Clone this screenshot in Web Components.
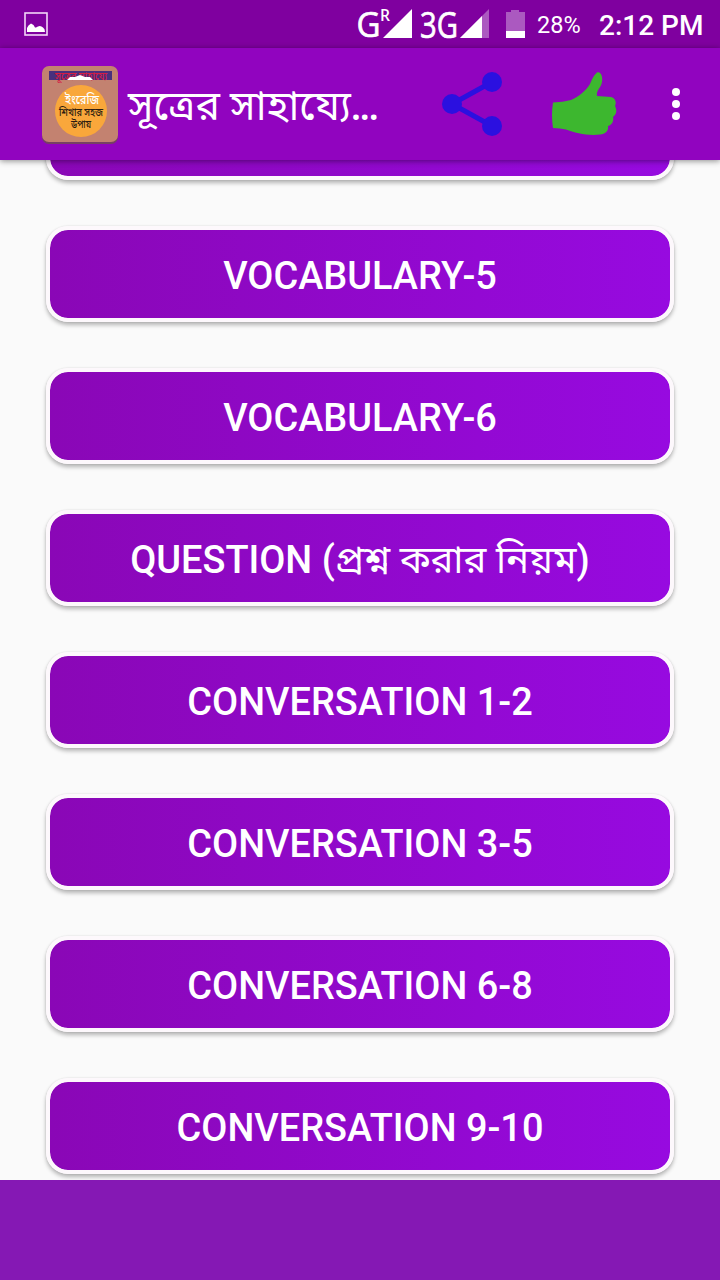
<!DOCTYPE html>
<html lang="bn">
<head>
<meta charset="UTF-8">
<meta name="viewport" content="width=device-width, initial-scale=1.0">
<title>সূত্রের সাহায্যে</title>
<style>
    body {
        margin: 0;
        background: #fafafa;
        font-family: Roboto, "Noto Sans", "Noto Sans Bengali", sans-serif;
    }

    .bn {
        font-weight: 400;
        font-size: 38.3px;
    }

    .dots {
        font-family: "Noto Sans", sans-serif;
        font-size: 36px;
        font-weight: 600;
        letter-spacing: -1px;
    }
</style>
</head>
<body>
<app-screen>
    <status-bar slot="status" battery="28%" time="2:12 PM"></status-bar>
    <app-bar slot="bar">সূত্রের সাহায্যে<span class="dots">...</span></app-bar>
    <lesson-button></lesson-button>
    <lesson-button>VOCABULARY-5</lesson-button>
    <lesson-button>VOCABULARY-6</lesson-button>
    <lesson-button>QUESTION (<span class="bn">প্রশ্ন করার নিয়ম</span>)</lesson-button>
    <lesson-button>CONVERSATION 1-2</lesson-button>
    <lesson-button>CONVERSATION 3-5</lesson-button>
    <lesson-button>CONVERSATION 6-8</lesson-button>
    <lesson-button>CONVERSATION 9-10</lesson-button>
</app-screen>

<script>
class AppScreen extends HTMLElement {
    connectedCallback() {
        this.attachShadow({ mode: 'open' });
        this.shadowRoot.innerHTML = `
            <style>
                :host {
                    display: flex;
                    flex-direction: column;
                    width: 720px;
                    height: 1280px;
                    overflow: hidden;
                }

                .list {
                    flex: 1;
                    min-height: 0;
                    display: flex;
                    flex-direction: column;
                    justify-content: flex-end;
                    gap: 46px;
                    padding: 0 46px 6px;
                    overflow: hidden;
                    background: #fafafa;
                }

                .ad-banner {
                    height: 100px;
                    background: #8518b4;
                }
            </style>
            <slot name="status"></slot>
            <slot name="bar"></slot>
            <div class="list"><slot></slot></div>
            <div class="ad-banner"></div>
        `;
    }
}

class StatusBar extends HTMLElement {
    connectedCallback() {
        this.attachShadow({ mode: 'open' });
        this.shadowRoot.innerHTML = `
            <style>
                :host {
                    display: flex;
                    align-items: center;
                    height: 48px;
                    box-sizing: border-box;
                    padding: 0 17px 0 24px;
                    background: #7f009f;
                    color: #fff;
                }

                svg {
                    display: block;
                }

                .signal {
                    margin-left: auto;
                }

                .battery {
                    width: 43px;
                    margin-left: 12px;
                    padding-top: 2px;
                    font-size: 23.5px;
                    white-space: nowrap;
                }

                .time {
                    width: 104px;
                    margin-left: 19px;
                    font-size: 28px;
                    font-weight: 500;
                    white-space: nowrap;
                    padding-top: 2px;
                }
            </style>
            <svg width="24" height="48" viewBox="0 0 24 48">
                <rect x="1" y="13" width="22" height="22" fill="none" stroke="#f3d5f8" stroke-width="1.6"/>
                <path d="M3 32v-4q1-3 4-4.500q3 1 4 4h1q4-3 7 0q2 1 2 4.500z" fill="#fff"/>
            </svg>
            <svg class="signal" width="169" height="48" viewBox="356 0 169 48" fill="#fff">
                <g font-family="Open Sans, Noto Sans, sans-serif">
                    <text x="356.500" y="37" font-size="35" stroke="#fff" stroke-width=".7" textLength="24" lengthAdjust="spacingAndGlyphs">G</text>
                    <text x="380" y="21" font-size="16" font-weight="600" textLength="10" lengthAdjust="spacingAndGlyphs">R</text>
                    <text x="420" y="38" font-size="36" stroke="#fff" stroke-width=".7" textLength="38" lengthAdjust="spacingAndGlyphs">3G</text>
                </g>
                <path d="M412 9v29h-29z"/>
                <path d="M489 9v29h-29z" opacity=".35"/>
                <path d="M482 16v22h-22z"/>
                <path d="M511 10h8v2h6v26h-19V12h5z" opacity=".35"/>
                <path d="M506 31h19v7h-19z"/>
            </svg>
            <span class="battery">${this.getAttribute('battery')}</span>
            <span class="time">${this.getAttribute('time')}</span>
        `;
    }
}

class AppBar extends HTMLElement {
    connectedCallback() {
        this.attachShadow({ mode: 'open' });
        this.shadowRoot.innerHTML = `
            <style>
                :host {
                    display: flex;
                    align-items: center;
                    height: 112px;
                    box-sizing: border-box;
                    padding: 0 32px 0 40px;
                    background: #9104bf;
                    box-shadow: 0 1px 6px rgba(0, 0, 0, 0.45);
                    color: #fff;
                    position: relative;
                    z-index: 1;
                }

                svg {
                    display: block;
                    flex: none;
                }

                .title {
                    width: 252px;
                    margin-left: 8px;
                    padding-top: 4px;
                    font-size: 41px;
                    line-height: 56px;
                    white-space: nowrap;
                }

                .share {
                    margin-left: 60px;
                }

                .like {
                    margin-left: 46px;
                }

                .more {
                    margin-left: auto;
                }
            </style>
            <svg width="80" height="112" viewBox="40 48 80 112">
                <rect x="42" y="67" width="76" height="77" rx="7" fill="#774063"/>
                <rect x="42" y="66" width="76" height="76" rx="7" fill="#c38270"/>
                <path d="M49 71h63v9H49z" fill="#48307e"/>
                <circle cx="81" cy="111" r="26" fill="#f9a73b"/>
                <g text-anchor="middle" font-weight="500">
                    <text x="81" y="80" font-size="11" fill="#d51d45" textLength="52" lengthAdjust="spacingAndGlyphs">সূত্রের সাহায্যে</text>
                    <text x="82" y="104" font-size="13" fill="#fff" textLength="34" lengthAdjust="spacingAndGlyphs">ইংরেজি</text>
                    <text x="81" y="115.500" font-size="10.500" fill="#2b1c10" textLength="44" lengthAdjust="spacingAndGlyphs">শিখার সহজ</text>
                    <text x="81" y="127.500" font-size="10.500" fill="#2b1c10" textLength="20" lengthAdjust="spacingAndGlyphs">উপায়</text>
                </g>
                <path d="M67 80l3-3 5 0 5-2 5 2 5 0 3 3z" fill="#fff"/>
            </svg>
            <div class="title"><slot></slot></div>
            <svg class="share" width="64" height="112" viewBox="440 48 64 112" fill="#2b10e0">
                <path d="M492 82l-40 22 40 22" fill="none" stroke="#2b10e0" stroke-width="5"/>
                <circle cx="452" cy="104" r="10"/>
                <circle cx="492" cy="82" r="10"/>
                <circle cx="492" cy="126" r="10"/>
            </svg>
            <svg class="like" width="70" height="112" viewBox="550 48 70 112">
                <path d="M553 102.500Q563 102 571 100C578 97 586 91 590 84Q593 76 597 72.500C601 71 603 77 602 82C601 88 596 90 597 96L611 97C615 98 617 102 615 106C617 110 617 114 613 117C614 121 612 125 608 126C609 131 605 134 600 134.500C588 136 575 133 566 129.500Q560 128 553 128Q551 115 553 102.500Z" fill="#3db72f"/>
            </svg>
            <svg class="more" width="24" height="112" viewBox="664 48 24 112" fill="#fff">
                <circle cx="676" cy="92" r="4"/>
                <circle cx="676" cy="104" r="4"/>
                <circle cx="676" cy="116" r="4"/>
            </svg>
        `;
    }
}

class LessonButton extends HTMLElement {
    connectedCallback() {
        this.attachShadow({ mode: 'open' });
        this.shadowRoot.innerHTML = `
            <style>
                :host {
                    display: flex;
                    flex: none;
                    align-items: center;
                    justify-content: center;
                    height: 96px;
                    box-sizing: border-box;
                    padding-top: 4px;
                    border: 4px solid #fdf8fc;
                    border-radius: 22px;
                    background: linear-gradient(to right, #8a07b6, #970ae0) padding-box;
                    box-shadow: 0 3px 4px rgba(0, 0, 0, 0.28), 0 0 2px rgba(0, 0, 0, 0.12);
                    color: #fff;
                    font-size: 37.9px;
                    font-weight: 500;
                    line-height: 56px;
                    white-space: nowrap;
                }
            </style>
            <span><slot></slot></span>
        `;
    }
}

customElements.define('app-screen', AppScreen);
customElements.define('status-bar', StatusBar);
customElements.define('app-bar', AppBar);
customElements.define('lesson-button', LessonButton);
</script>
</body>
</html>
